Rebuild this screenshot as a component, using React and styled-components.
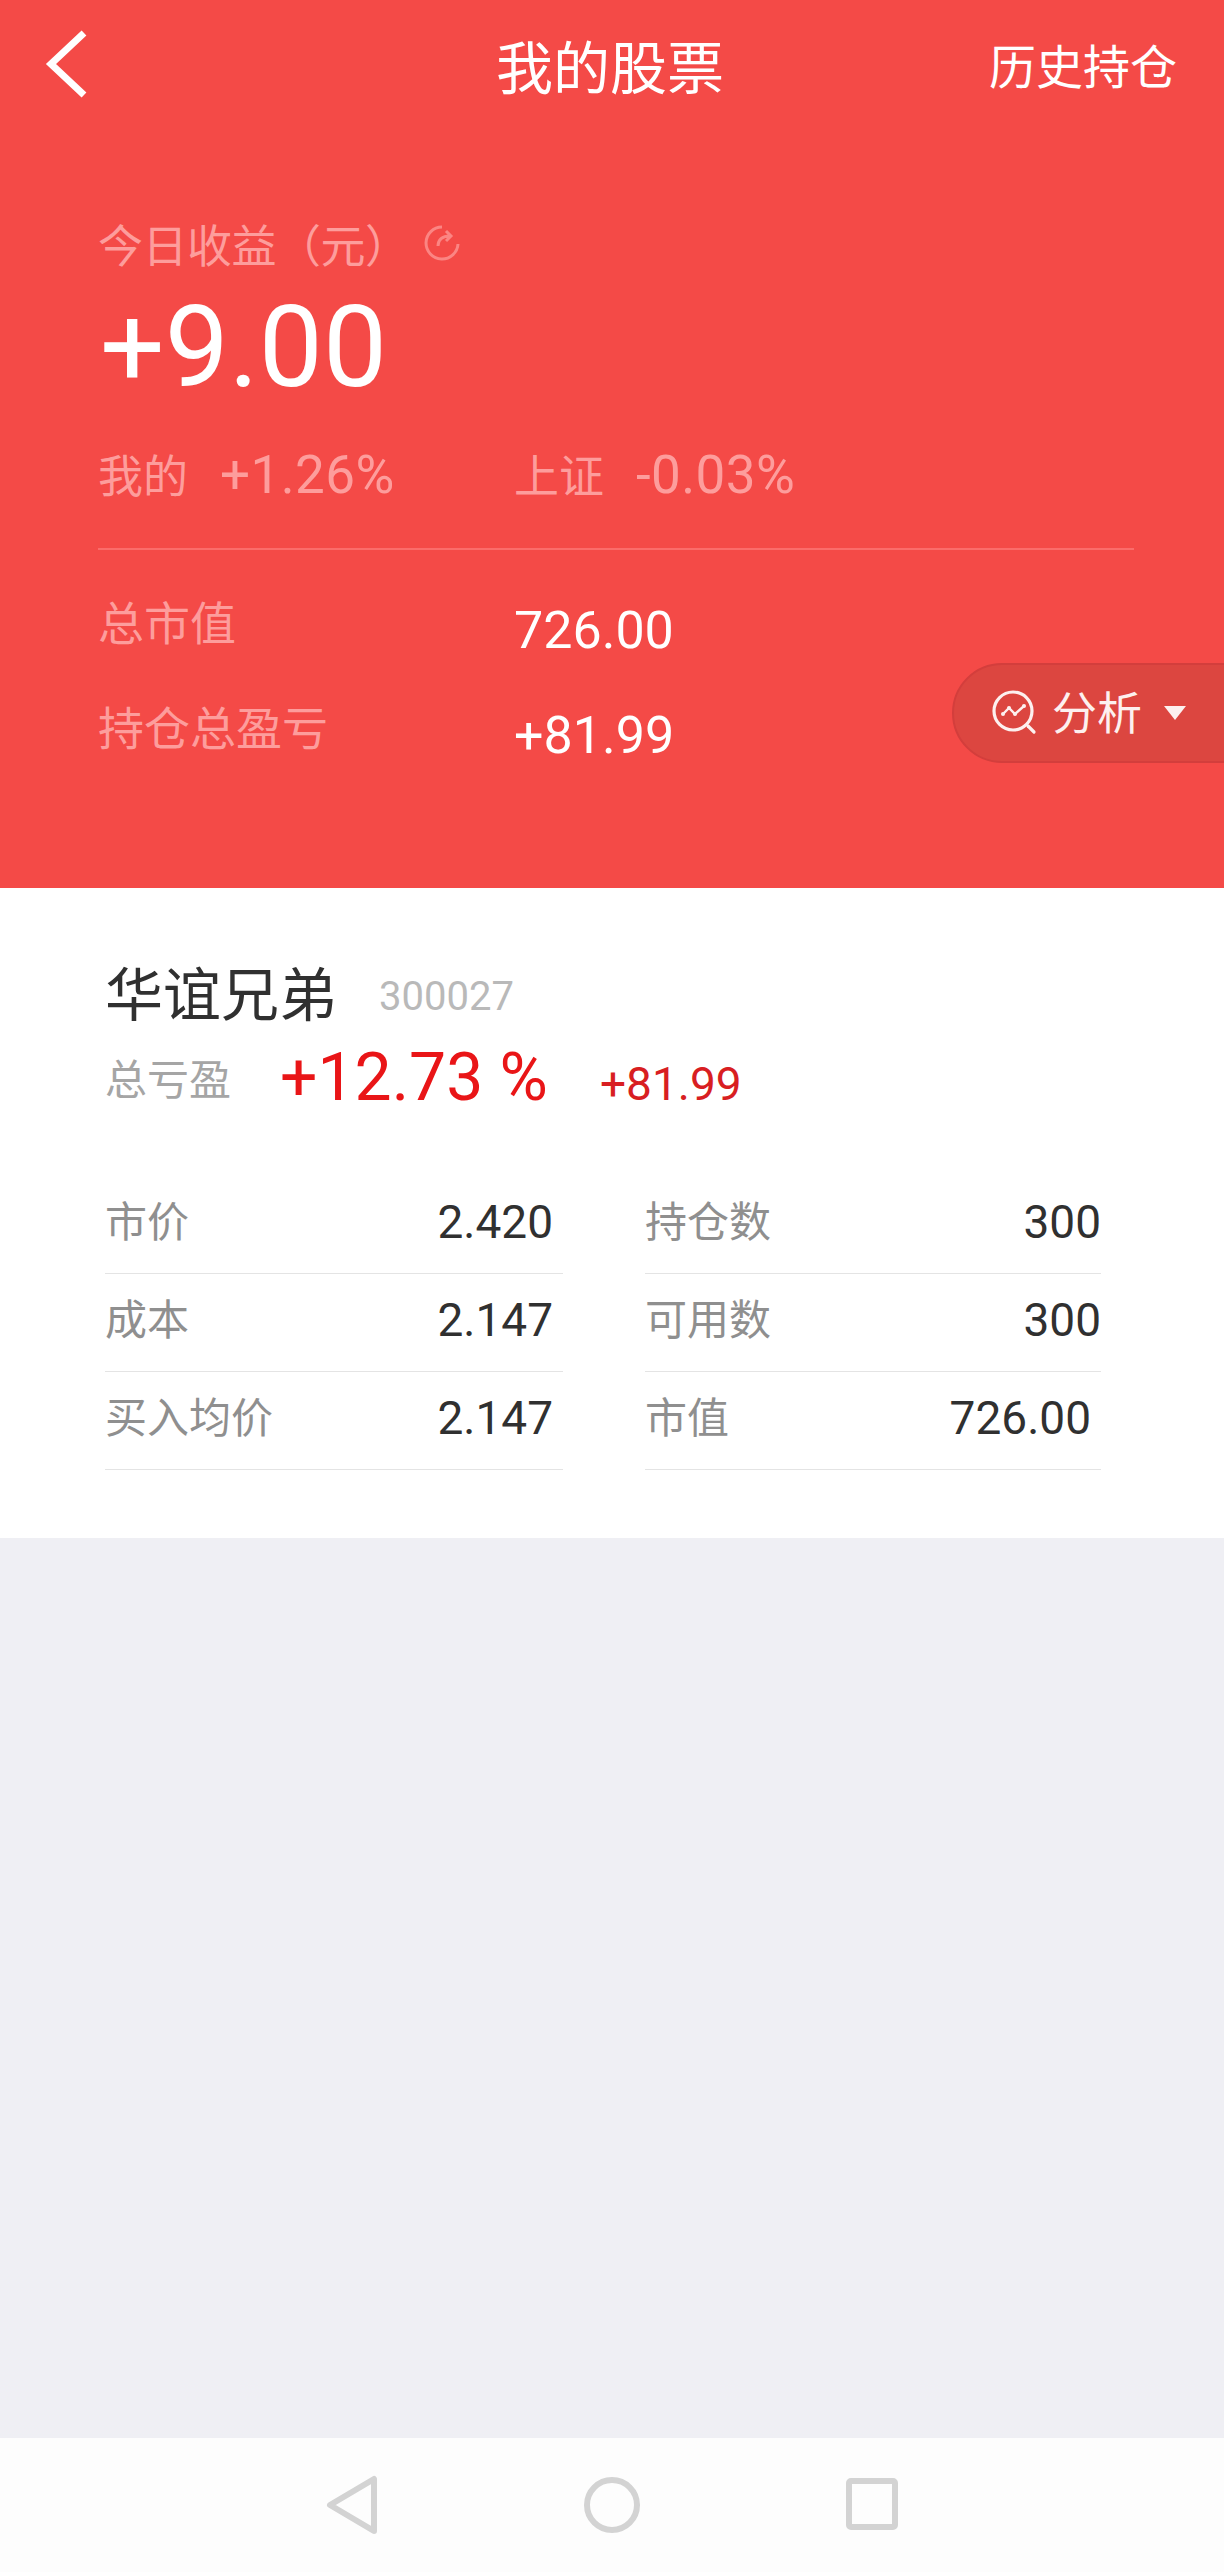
import React from "react";
import styled, { createGlobalStyle } from "styled-components";

const CJK = `"Noto Sans CJK SC", "Noto Sans", sans-serif`;
const NUM = `Roboto, "Noto Sans CJK SC", sans-serif`;

const Global = createGlobalStyle`
  html, body { margin: 0; padding: 0; background: #efeff4; }
  * { box-sizing: border-box; }
`;

const Page = styled.div`
  width: 1224px;
  height: 2572px;
  display: flex;
  flex-direction: column;
  font-family: ${CJK};
`;

const Hero = styled.section`
  position: relative;
  height: 888px;
  background: #f44a47;
  color: #fff;
  display: flex;
  flex-direction: column;
`;

const TopBar = styled.header`
  height: 128px;
  display: grid;
  grid-template-columns: 1fr auto 1fr;
  align-items: center;
  padding: 0 47px 0 43px;
`;

const BackButton = styled.button`
  justify-self: start;
  width: 44px;
  height: 68px;
  padding: 0;
  border: 0;
  background: none;
  display: block;
`;

const Title = styled.h1`
  margin: 0;
  font-size: 57px;
  font-weight: 400;
  line-height: 64px;
`;

const HistoryLink = styled.span`
  justify-self: end;
  font-size: 47px;
  line-height: 64px;
`;

const Summary = styled.div`
  padding: 85px 90px 0 98px;
`;

const Caption = styled.div`
  display: flex;
  align-items: center;
  gap: 13px;
  height: 60px;
  font-size: 45px;
  color: #fd9d9c;
`;

const CaptionText = styled.span`
  letter-spacing: -0.5px;
`;

const TodayValue = styled.div`
  font-family: ${NUM};
  font-size: 114px;
  line-height: 130px;
  height: 116px;
  margin-top: 9px;
  padding-left: 2px;
`;

const CompareRow = styled.div`
  display: flex;
  margin-top: 44px;
  height: 66px;
  align-items: center;
`;

const CompareItem = styled.div`
  width: 416px;
  display: flex;
  align-items: center;
  gap: 32px;
  color: #fd9d9c;
`;

const CompareLabel = styled.span`
  font-size: 45px;
  padding-bottom: 4px;
`;

const CompareValue = styled.span`
  font-family: ${NUM};
  font-size: 53px;
  letter-spacing: 0.4px;
`;

const Rule = styled.div`
  height: 2px;
  margin-top: 40px;
  background: #fb6c6a;
`;

const TotalsBlock = styled.div`
  margin-top: 28px;
`;

const TotalRow = styled.div`
  display: flex;
  align-items: center;
  height: 105px;
`;

const TotalLabel = styled.span`
  width: 416px;
  font-size: 46px;
  color: #fd9d9c;
  padding-bottom: 22px;
`;

const TotalValue = styled.span`
  font-family: ${NUM};
  font-size: 52px;
  color: #fff;
`;

const AnalysisPill = styled.div`
  position: absolute;
  right: -40px;
  top: 663px;
  width: 312px;
  height: 100px;
  border-radius: 50px 0 0 50px;
  background: #dc4640;
  border: 2px solid #d33e3c;
  display: flex;
  align-items: center;
  padding-left: 38px;
  gap: 14px;
  font-size: 45px;
  color: #fdf0ef;
`;

const PillText = styled.span`
  padding-bottom: 6px;
`;

const Caret = styled.span`
  width: 0;
  height: 0;
  margin-left: 8px;
  border-left: 11px solid transparent;
  border-right: 11px solid transparent;
  border-top: 14px solid #fdf0ef;
`;

const Card = styled.section`
  height: 650px;
  background: #fff;
  padding: 65px 0 0 105px;
`;

const NameRow = styled.div`
  display: flex;
  align-items: center;
  height: 76px;
`;

const StockName = styled.span`
  font-size: 58px;
  color: #303030;
`;

const StockCode = styled.span`
  font-family: ${NUM};
  font-size: 40px;
  color: #b9b9b9;
  margin: 10px 0 0 42px;
`;

const ProfitRow = styled.div`
  display: flex;
  align-items: baseline;
  height: 84px;
  margin-top: 10px;
`;

const ProfitLabel = styled.span`
  width: 175px;
  font-size: 42px;
  color: #a5a5a5;
  transform: translateY(-5px);
`;

const ProfitPercent = styled.span`
  width: 320px;
  font-family: ${NUM};
  font-size: 66px;
  color: #e91517;
`;

const ProfitAmount = styled.span`
  font-family: ${NUM};
  font-size: 46px;
  color: #d81e22;
`;

const Tables = styled.div`
  display: flex;
  gap: 82px;
  margin-top: 53px;
`;

const Table = styled.div`
  width: ${(p) => p.$width}px;
`;

const Row = styled.div`
  height: 98px;
  display: flex;
  align-items: center;
  justify-content: space-between;
  border-bottom: 1.5px solid #e4e4e4;
  padding-right: ${(p) => p.$inset}px;
`;

const RowLabel = styled.span`
  font-size: 42px;
  color: #8f8f8f;
  padding-bottom: 13px;
`;

const RowValue = styled.span`
  font-family: ${NUM};
  font-size: 46px;
  color: #303030;
  padding-bottom: 5px;
`;

const Filler = styled.div`
  flex: 1;
  background: #efeff4;
`;

const NavBar = styled.nav`
  height: 134px;
  background: #fdfdfd;
  display: flex;
  align-items: center;
  justify-content: center;
`;

const NavIcon = styled.svg`
  display: block;
  margin-left: ${(p) => p.$gap || 0}px;
  fill: none;
  stroke: #d3d3d3;
  stroke-width: 6;
  stroke-linejoin: round;
`;

const BackChevron = () => (
  <svg width="44" height="68" viewBox="0 0 44 68" fill="none" stroke="#fff" strokeWidth="7">
    <path d="M41 3 8 34l33 31" />
  </svg>
);

const RefreshIcon = () => (
  <svg width="38" height="38" viewBox="0 0 38 38" fill="none" stroke="#fb8583" strokeWidth="3">
    <path d="M35 20A16 16 0 1 1 19 3" />
    <path d="M15 22c0-6 4-10 12-10M23 7l5 5-5 5" />
  </svg>
);

const AnalysisIcon = () => (
  <svg width="46" height="46" viewBox="0 0 46 46" fill="none" stroke="#fdf0ef" strokeWidth="3.2" strokeLinecap="round">
    <circle cx="21" cy="21" r="19" />
    <path d="m36 36 6 6" />
    <path d="m11 24 6-6 6 6 9-8" strokeWidth="2.4" />
    <circle cx="11" cy="24" r="2" fill="#fdf0ef" stroke="none" />
    <circle cx="17" cy="18" r="2" fill="#fdf0ef" stroke="none" />
    <circle cx="23" cy="24" r="2" fill="#fdf0ef" stroke="none" />
    <circle cx="32" cy="16" r="2" fill="#fdf0ef" stroke="none" />
  </svg>
);

const leftRows = [
  ["市价", "2.420"],
  ["成本", "2.147"],
  ["买入均价", "2.147"],
];

const rightRows = [
  ["持仓数", "300", 0],
  ["可用数", "300", 0],
  ["市值", "726.00", 10],
];

export default function App() {
  return (
    <Page>
      <Global />
      <Hero>
        <TopBar>
          <BackButton aria-label="返回">
            <BackChevron />
          </BackButton>
          <Title>我的股票</Title>
          <HistoryLink>历史持仓</HistoryLink>
        </TopBar>
        <Summary>
          <Caption>
            <CaptionText>今日收益（元）</CaptionText>
            <RefreshIcon />
          </Caption>
          <TodayValue>+9.00</TodayValue>
          <CompareRow>
            <CompareItem>
              <CompareLabel>我的</CompareLabel>
              <CompareValue>+1.26%</CompareValue>
            </CompareItem>
            <CompareItem>
              <CompareLabel>上证</CompareLabel>
              <CompareValue>-0.03%</CompareValue>
            </CompareItem>
          </CompareRow>
          <Rule />
          <TotalsBlock>
            <TotalRow>
              <TotalLabel>总市值</TotalLabel>
              <TotalValue>726.00</TotalValue>
            </TotalRow>
            <TotalRow>
              <TotalLabel>持仓总盈亏</TotalLabel>
              <TotalValue>+81.99</TotalValue>
            </TotalRow>
          </TotalsBlock>
        </Summary>
        <AnalysisPill>
          <AnalysisIcon />
          <PillText>分析</PillText>
          <Caret />
        </AnalysisPill>
      </Hero>
      <Card>
        <NameRow>
          <StockName>华谊兄弟</StockName>
          <StockCode>300027</StockCode>
        </NameRow>
        <ProfitRow>
          <ProfitLabel>总亏盈</ProfitLabel>
          <ProfitPercent>+12.73 %</ProfitPercent>
          <ProfitAmount>+81.99</ProfitAmount>
        </ProfitRow>
        <Tables>
          <Table $width={458}>
            {leftRows.map(([label, value]) => (
              <Row key={label} $inset={10}>
                <RowLabel>{label}</RowLabel>
                <RowValue>{value}</RowValue>
              </Row>
            ))}
          </Table>
          <Table $width={456}>
            {rightRows.map(([label, value, inset]) => (
              <Row key={label} $inset={inset}>
                <RowLabel>{label}</RowLabel>
                <RowValue>{value}</RowValue>
              </Row>
            ))}
          </Table>
        </Tables>
      </Card>
      <Filler />
      <NavBar>
        <NavIcon width="52" height="76" viewBox="0 0 52 76">
          <path d="M48 12v52L4 38z" />
        </NavIcon>
        <NavIcon width="56" height="76" viewBox="0 0 56 76" $gap={206}>
          <circle cx="28" cy="38" r="25" />
        </NavIcon>
        <NavIcon width="52" height="76" viewBox="0 0 52 76" $gap={206}>
          <rect x="3" y="14" width="46" height="46" rx="2" />
        </NavIcon>
      </NavBar>
    </Page>
  );
}
